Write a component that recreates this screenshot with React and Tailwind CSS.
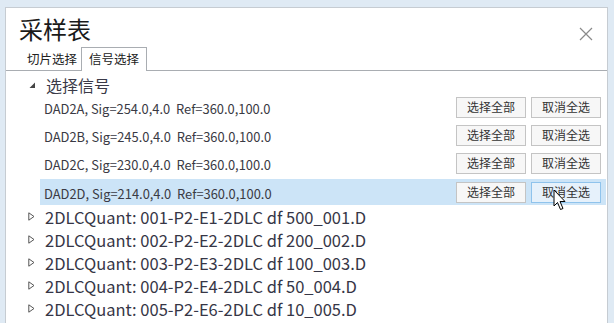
import React from "react";

const cjk = { fontFamily: '"Noto Sans CJK SC", "Noto Sans", sans-serif' };

const signals = [
  "DAD2A, Sig=254.0,4.0  Ref=360.0,100.0",
  "DAD2B, Sig=245.0,4.0  Ref=360.0,100.0",
  "DAD2C, Sig=230.0,4.0  Ref=360.0,100.0",
  "DAD2D, Sig=214.0,4.0  Ref=360.0,100.0",
];

const files = [
  "2DLCQuant: 001-P2-E1-2DLC df 500_001.D",
  "2DLCQuant: 002-P2-E2-2DLC df 200_002.D",
  "2DLCQuant: 003-P2-E3-2DLC df 100_003.D",
  "2DLCQuant: 004-P2-E4-2DLC df 50_004.D",
  "2DLCQuant: 005-P2-E6-2DLC df 10_005.D",
];

function Btn({ children, hover }) {
  return (
    <div
      className={
        "w-[70px] h-[21px] flex items-center justify-center text-[12px] leading-[16px] text-[#333] border " +
        (hover ? "border-[#8fc3ec] bg-[#e6f1fb]" : "border-[#c4c4c4] bg-[#f7f7f7]")
      }
      style={cjk}
    >
      {children}
    </div>
  );
}

export default function App() {
  return (
    <div className="w-[614px] h-[323px] overflow-hidden bg-[#dfeaf4] pt-[7px] pl-[5px] pr-[6px]">
      <div className="relative h-[330px] bg-white border border-b-0 border-[#c6ccd2]">
        {/* header */}
        <div className="flex items-start justify-between h-[39px]">
          <div className="ml-[13px] mt-[6px] text-[24px] leading-[30px] text-[#1a1a1a]" style={cjk}>
            采样表
          </div>
          <svg className="mt-[19px] mr-[14px]" width="14" height="14" viewBox="0 0 14 14">
            <path d="M1 1 L13 13 M13 1 L1 13" stroke="#8a8a8a" strokeWidth="1.2" fill="none" />
          </svg>
        </div>
        {/* tabs */}
        <div className="flex items-end h-[24px] border-b border-[#a9adb2]">
          <div className="ml-[21px] w-[54px] h-[22px] flex items-center text-[12.5px] text-[#222]" style={cjk}>
            切片选择
          </div>
          <div
            className="w-[66px] h-[24px] -mb-px bg-white border border-b-0 border-[#a9adb2] flex items-center justify-center text-[12.5px] text-[#222]"
            style={cjk}
          >
            信号选择
          </div>
        </div>
        {/* tree */}
        <div className="pt-[6px]">
          <div className="flex items-center h-[16px]">
            <svg className="ml-[23px]" width="7" height="7" viewBox="0 0 7 7">
              <path d="M6 0.5 L6 6 L0.5 6 Z" fill="#444" />
            </svg>
            <span className="ml-[10px] text-[16px] leading-[16px] text-[#3a3a48]" style={cjk}>
              选择信号
            </span>
          </div>
          <div className="flex flex-col">
            {signals.map((s, i) => (
              <div
                key={i}
                className={
                  "ml-[34px] mr-[1px] flex items-center justify-between pl-[4px] pr-[5px] " +
                  (i === 3 ? "bg-[#cce4f7] h-[26px] mt-[2px]" : "h-[28px]")
                }
              >
                <span className="pt-[3px] text-[12.9px] leading-[17px] text-[#3a3a44] whitespace-pre" style={cjk}>
                  {s}
                </span>
                <div className="flex gap-[5px]">
                  <Btn>选择全部</Btn>
                  <Btn hover={i === 3}>取消全选</Btn>
                </div>
              </div>
            ))}
          </div>
          <div className="flex flex-col">
            {files.map((f, i) => (
              <div key={i} className="flex items-center h-[23px]">
                <svg className="ml-[22px]" width="7" height="9" viewBox="0 0 7 9">
                  <path d="M0.8 0.8 L6 4.5 L0.8 8.2 Z" fill="none" stroke="#555" strokeWidth="1" />
                </svg>
                <span className="ml-[10px] pt-[2px] text-[16.5px] leading-[21px] text-[#363646] whitespace-pre" style={cjk}>
                  {f}
                </span>
              </div>
            ))}
          </div>
        </div>
        {/* cursor */}
        <svg className="absolute left-[547px] top-[181px]" width="14" height="22" viewBox="0 0 14 22">
          <path
            d="M1 1 L1 17 L4.5 13.5 L7.5 20.5 L10 19.5 L7 12.5 L12 12.5 Z"
            fill="white"
            stroke="black"
            strokeWidth="1"
            strokeLinejoin="miter"
          />
        </svg>
      </div>
    </div>
  );
}
